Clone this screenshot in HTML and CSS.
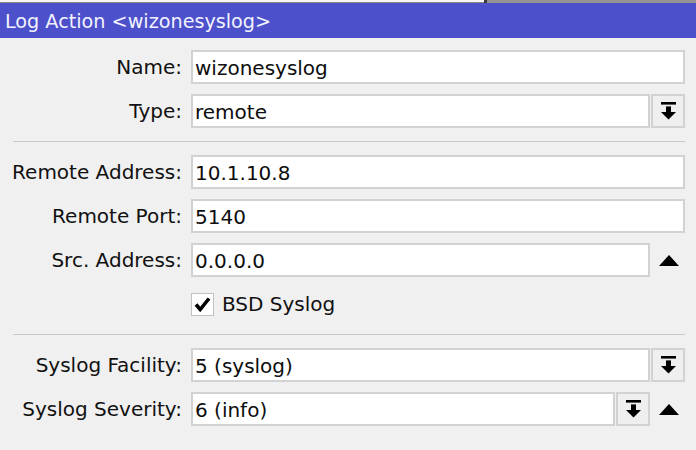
FILE: index.html
```html
<!DOCTYPE html>
<html>
<head>
<meta charset="utf-8">
<title>Log Action</title>
<link rel="stylesheet" href="styles.css">
</head>
<body>
<div class="topstrip">
  <div class="ts-left"></div>
  <div class="ts-divider"></div>
  <div class="ts-right"></div>
</div>
<div class="titlebar">Log Action &lt;wizonesyslog&gt;</div>
<div class="form">
  <div class="row">
    <div class="lbl">Name:</div>
    <div class="field"><div class="input">wizonesyslog</div></div>
  </div>
  <div class="row">
    <div class="lbl">Type:</div>
    <div class="field">
      <div class="input">remote</div>
      <div class="dd"><svg width="15" height="18" viewBox="0 0 15 18"><rect x="0" y="0" width="15" height="2.6" fill="#000"/><rect x="5" y="4.4" width="5" height="6" fill="#000"/><polygon points="0,10 15,10 7.5,17.6" fill="#000"/></svg></div>
    </div>
  </div>
  <div class="sep"></div>
  <div class="row">
    <div class="lbl">Remote Address:</div>
    <div class="field"><div class="input">10.1.10.8</div></div>
  </div>
  <div class="row">
    <div class="lbl">Remote Port:</div>
    <div class="field"><div class="input">5140</div></div>
  </div>
  <div class="row">
    <div class="lbl">Src. Address:</div>
    <div class="field">
      <div class="input">0.0.0.0</div>
      <div class="up"><svg width="20" height="11" viewBox="0 0 20 11"><polygon points="10,0 20,11 0,11" fill="#000"/></svg></div>
    </div>
  </div>
  <div class="row">
    <div class="lbl"></div>
    <div class="field check-field">
      <div class="checkbox"><svg width="19" height="19" viewBox="0 0 19 19"><path d="M3 9.5 L7.2 14.5 L16 3.5" fill="none" stroke="#000" stroke-width="3.6" stroke-linejoin="miter" stroke-linecap="butt"/></svg></div>
      <div class="check-label">BSD Syslog</div>
    </div>
  </div>
  <div class="sep"></div>
  <div class="row">
    <div class="lbl">Syslog Facility:</div>
    <div class="field">
      <div class="input">5 (syslog)</div>
      <div class="dd"><svg width="15" height="18" viewBox="0 0 15 18"><rect x="0" y="0" width="15" height="2.6" fill="#000"/><rect x="5" y="4.4" width="5" height="6" fill="#000"/><polygon points="0,10 15,10 7.5,17.6" fill="#000"/></svg></div>
    </div>
  </div>
  <div class="row">
    <div class="lbl">Syslog Severity:</div>
    <div class="field">
      <div class="input">6 (info)</div>
      <div class="dd"><svg width="15" height="18" viewBox="0 0 15 18"><rect x="0" y="0" width="15" height="2.6" fill="#000"/><rect x="5" y="4.4" width="5" height="6" fill="#000"/><polygon points="0,10 15,10 7.5,17.6" fill="#000"/></svg></div>
      <div class="up"><svg width="20" height="11" viewBox="0 0 20 11"><polygon points="10,0 20,11 0,11" fill="#000"/></svg></div>
    </div>
  </div>
</div>
</body>
</html>
```

FILE: styles.css
```css
html, body {
  margin: 0;
  padding: 0;
  background: #f0f0f0;
  width: 696px;
  height: 450px;
  overflow: hidden;
  font-family: "DejaVu Sans", "Liberation Sans", sans-serif;
  color: #111;
}

.topstrip {
  display: flex;
  height: 3px;
}
.ts-left {
  width: 484px;
  background: #f6f6f6;
  border-bottom: 1px solid #8a8a8a;
  box-sizing: border-box;
}
.ts-divider {
  width: 3px;
  background: #3a3a3a;
}
.ts-right {
  flex: 1;
  background: #949494;
}

.titlebar {
  height: 35px;
  background: #4c50ca;
  color: #f2f2ff;
  font-size: 19.2px;
  line-height: 38px;
  padding-left: 5px;
  white-space: nowrap;
}

.form {
  display: flex;
  flex-direction: column;
  gap: 10px;
  padding: 12px 11px 0 13px;
}

.row {
  display: flex;
  align-items: center;
  height: 34px;
}

.lbl {
  width: 169px;
  flex: none;
  display: flex;
  justify-content: flex-end;
  white-space: nowrap;
  font-size: 20px;
  line-height: 36px;
  margin-right: 9px;
}

.field {
  flex: 1;
  display: flex;
  align-items: stretch;
  height: 34px;
}

.input {
  flex: 1;
  box-sizing: border-box;
  background: #fff;
  border: 2px solid #d2d2d2;
  font-size: 20px;
  line-height: 32px;
  padding-left: 2px;
  white-space: nowrap;
  color: #0d0d0d;
}

.dd {
  width: 34px;
  flex: none;
  box-sizing: border-box;
  margin-left: 1px;
  background: #efefef;
  border: 2px solid #d2d2d2;
  display: flex;
  align-items: center;
  justify-content: center;
}

.up {
  width: 35px;
  flex: none;
  display: flex;
  align-items: center;
  justify-content: center;
  padding-left: 2px;
  box-sizing: border-box;
}

.sep {
  height: 1px;
  background: #c9c9c9;
  margin: 3px 0;
}

.check-field {
  align-items: center;
}

.checkbox {
  width: 23px;
  height: 23px;
  box-sizing: border-box;
  background: #fff;
  border: 1.5px solid #c2c2c2;
  display: flex;
  align-items: center;
  justify-content: center;
}

.check-label {
  margin-left: 8px;
  font-size: 20px;
  line-height: 36px;
}
```
